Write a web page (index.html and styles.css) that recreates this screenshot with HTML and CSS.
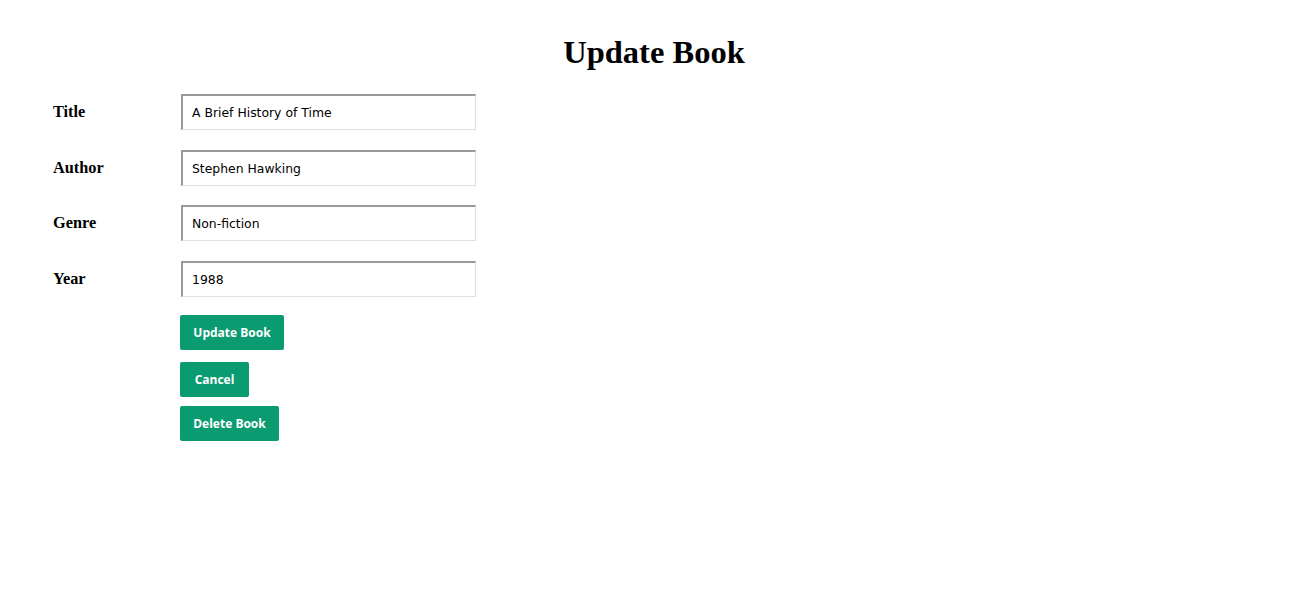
FILE: index.html
```html
<!DOCTYPE html>
<html>
<head>
<meta charset="utf-8">
<title>Update Book</title>
<link rel="stylesheet" href="styles.css">
</head>
<body>
<h1 class="page-title">Update Book</h1>
<form class="book-form">
  <div class="row">
    <label class="label">Title</label>
    <input class="field" type="text" value="A Brief History of Time">
  </div>
  <div class="row">
    <label class="label">Author</label>
    <input class="field" type="text" value="Stephen Hawking">
  </div>
  <div class="row">
    <label class="label">Genre</label>
    <input class="field" type="text" value="Non-fiction">
  </div>
  <div class="row">
    <label class="label">Year</label>
    <input class="field" type="text" value="1988">
  </div>
  <div class="actions">
    <button type="button" class="btn btn-update">Update Book</button>
    <button type="button" class="btn btn-cancel">Cancel</button>
    <button type="button" class="btn btn-delete">Delete Book</button>
  </div>
</form>
</body>
</html>
```
FILE: styles.css
```css
html, body {
  margin: 0;
  padding: 0;
  background: #fff;
}
body {
  font-family: "Liberation Serif", "Times New Roman", serif;
  color: #000;
}
.page-title {
  margin: 0;
  padding-top: 34px;
  padding-left: 8px;
  text-align: center;
  font-size: 32.5px;
  font-weight: bold;
  line-height: 37px;
}
.book-form {
  margin-top: 23px;
  padding-left: 53px;
  display: flex;
  flex-direction: column;
}
.row {
  display: flex;
  align-items: center;
  height: 36px;
  margin-bottom: 19.6px;
}
.label {
  width: 128px;
  font-weight: bold;
  font-size: 16.3px;
  margin-top: 0;
}
.field {
  box-sizing: border-box;
  width: 295px;
  height: 36px;
  margin: 0;
  padding: 0 0 0 9px;
  border-style: solid;
  border-width: 2px 1px 1px 2px;
  border-color: #9a9a9a #e0e0e0 #e0e0e0 #9a9a9a;
  background: #fff;
  font-family: "DejaVu Sans", "Liberation Sans", sans-serif;
  font-size: 12.4px;
  color: #000;
  outline: none;
}
.actions {
  margin-left: 127px;
  margin-top: -1px;
  display: flex;
  flex-direction: column;
  align-items: flex-start;
}
.btn {
  box-sizing: border-box;
  height: 35px;
  margin: 0;
  padding: 0;
  border: none;
  border-radius: 2px;
  background: #0a9b71;
  color: #fff;
  font-family: "Open Sans", "Liberation Sans", sans-serif;
  font-weight: bold;
  font-size: 12px;
  white-space: nowrap;
  text-align: center;
  cursor: pointer;
}
.btn-update { width: 104px; margin-bottom: 12px; }
.btn-cancel { width: 69px; margin-bottom: 9px; }
.btn-delete { width: 99px; }
```
